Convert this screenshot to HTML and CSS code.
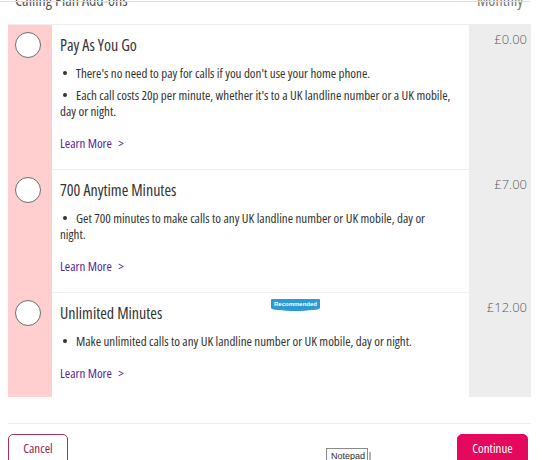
FILE: index.html
```html
<!DOCTYPE html>
<html lang="en">
<head>
<meta charset="utf-8">
<title>Calling Plan Add-ons</title>
<link rel="stylesheet" href="styles.css">
</head>
<body>
<div class="topline"></div>
<main class="page">
  <header class="head">
    <span class="head-title">Calling Plan Add-ons</span>
    <span class="head-col">Monthly</span>
  </header>

  <section class="plans">
    <div class="plan">
      <div class="plan-select"><span class="radio"></span></div>
      <div class="plan-body">
        <h2 class="plan-title">Pay As You Go</h2>
        <ul class="plan-points">
          <li>There's no need to pay for calls if you don't use your home phone.</li>
          <li>Each call costs 20p per minute, whether it's to a UK landline number or a UK mobile, day or night.</li>
        </ul>
        <a class="learn" href="#">Learn More <span class="chev">&gt;</span></a>
      </div>
      <div class="plan-price">£0.00</div>
    </div>

    <div class="plan">
      <div class="plan-select"><span class="radio"></span></div>
      <div class="plan-body">
        <h2 class="plan-title">700 Anytime Minutes</h2>
        <ul class="plan-points">
          <li>Get 700 minutes to make calls to any UK landline number or UK mobile, day or night.</li>
        </ul>
        <a class="learn" href="#">Learn More <span class="chev">&gt;</span></a>
      </div>
      <div class="plan-price">£7.00</div>
    </div>

    <div class="plan plan-last">
      <div class="plan-select"><span class="radio"></span></div>
      <div class="plan-body">
        <h2 class="plan-title">Unlimited Minutes</h2>
        <span class="badge">Recommended</span>
        <ul class="plan-points">
          <li>Make unlimited calls to any UK landline number or UK mobile, day or night.</li>
        </ul>
        <a class="learn" href="#">Learn More <span class="chev">&gt;</span></a>
      </div>
      <div class="plan-price">£12.00</div>
    </div>
  </section>

  <footer class="actions">
    <button class="btn btn-cancel" type="button">Cancel</button>
    <button class="btn btn-continue" type="button">Continue</button>
  </footer>
</main>
<div class="tooltip">Notepad</div>
</body>
</html>
```
FILE: styles.css
```css
* { box-sizing: border-box; }

body {
  margin: 0;
  background: #fff;
  font-family: "Open Sans", sans-serif;
  font-stretch: condensed;
  color: #3a3a3a;
  overflow: hidden;
}

.topline {
  position: absolute;
  left: 0;
  top: 1px;
  width: 530px;
  height: 1px;
  background: #dedede;
  z-index: 2;
}

.page {
  margin-left: 8px;
  width: 523px;
}

.head {
  display: flex;
  justify-content: space-between;
  margin-top: -10px;
  padding: 0 8px 14px 7px;
  border-bottom: 1px solid #efefef;
  font-size: 16px;
  line-height: 20px;
  color: #555;
}

.head-col { color: #777; }

.plan {
  display: grid;
  grid-template-columns: 44px 1fr 62px;
}

.plan-select {
  background: #ffcfd0;
  padding: 7px 0 0 7px;
}

.radio {
  display: block;
  width: 26px;
  height: 26px;
  border-radius: 50%;
  border: 1px solid #6d6d6d;
  background: #fff;
}

.plan-body {
  position: relative;
  padding: 10px 18px 18px 8px;
  border-bottom: 1px solid #f0f0f0;
}

.plan-last .plan-body {
  border-bottom: 0;
  padding-bottom: 16px;
}

.plan-title {
  margin: 0;
  font-size: 16px;
  line-height: 20px;
  font-weight: 400;
  color: #333;
}

.plan-points {
  list-style: none;
  margin: 10px 0 0;
  padding: 0;
  font-size: 13px;
  line-height: 16px;
  color: #333;
}

.plan-points li { margin-bottom: 6px; }
.plan-points li:last-child { margin-bottom: 0; }

.plan-points li::before {
  content: "";
  display: inline-block;
  width: 4px;
  height: 4px;
  border-radius: 50%;
  background: #333;
  margin: 0 9px 0 3px;
  vertical-align: 3px;
}

.learn {
  display: block;
  margin-top: 16px;
  font-size: 13px;
  line-height: 16px;
  color: #5a1f96;
  text-decoration: none;
}

.chev { margin-left: 4px; }

.plan-price {
  background: #ededed;
  padding: 6px 4px 0 0;
  text-align: right;
  font-size: 13px;
  font-stretch: normal;
  line-height: 16px;
  font-weight: 300;
  color: #5a5a5a;
}

.badge {
  position: absolute;
  left: 219px;
  top: 6px;
  width: 49px;
  height: 12px;
  background: #2a9bd3;
  color: #fff;
  font-family: "Liberation Sans", sans-serif;
  font-stretch: normal;
  font-size: 6px;
  font-weight: 700;
  line-height: 11px;
  text-align: center;
  border-radius: 1px 1px 50% 50% / 1px 1px 3px 3px;
}

.actions {
  display: flex;
  justify-content: space-between;
  margin-top: 26px;
  padding: 10px 3px 0 0;
  border-top: 1px solid #eeeeee;
}

.btn {
  font-family: "Open Sans", sans-serif;
  font-stretch: condensed;
  font-size: 13px;
  line-height: 16px;
  height: 32px;
  padding: 0 0 4px;
  border-radius: 5px;
  cursor: pointer;
}

.btn-cancel {
  width: 60px;
  background: #fff;
  color: #9c1d52;
  border: 1px solid #a3335f;
}

.btn-continue {
  width: 71px;
  background: #e5095d;
  color: #fff;
  border: 1px solid #e5095d;
}

.tooltip {
  position: absolute;
  left: 326px;
  top: 448px;
  width: 42px;
  height: 16px;
  padding: 2px 0 0 4px;
  background: #fbfbfb;
  border: 1px solid #8a8a8a;
  font-family: "Liberation Sans", sans-serif;
  font-size: 9px;
  line-height: 11px;
  color: #333;
}

.tooltip::after {
  content: "";
  position: absolute;
  right: -4px;
  top: 3px;
  width: 2px;
  height: 12px;
  background: #b5b5b5;
}
```
